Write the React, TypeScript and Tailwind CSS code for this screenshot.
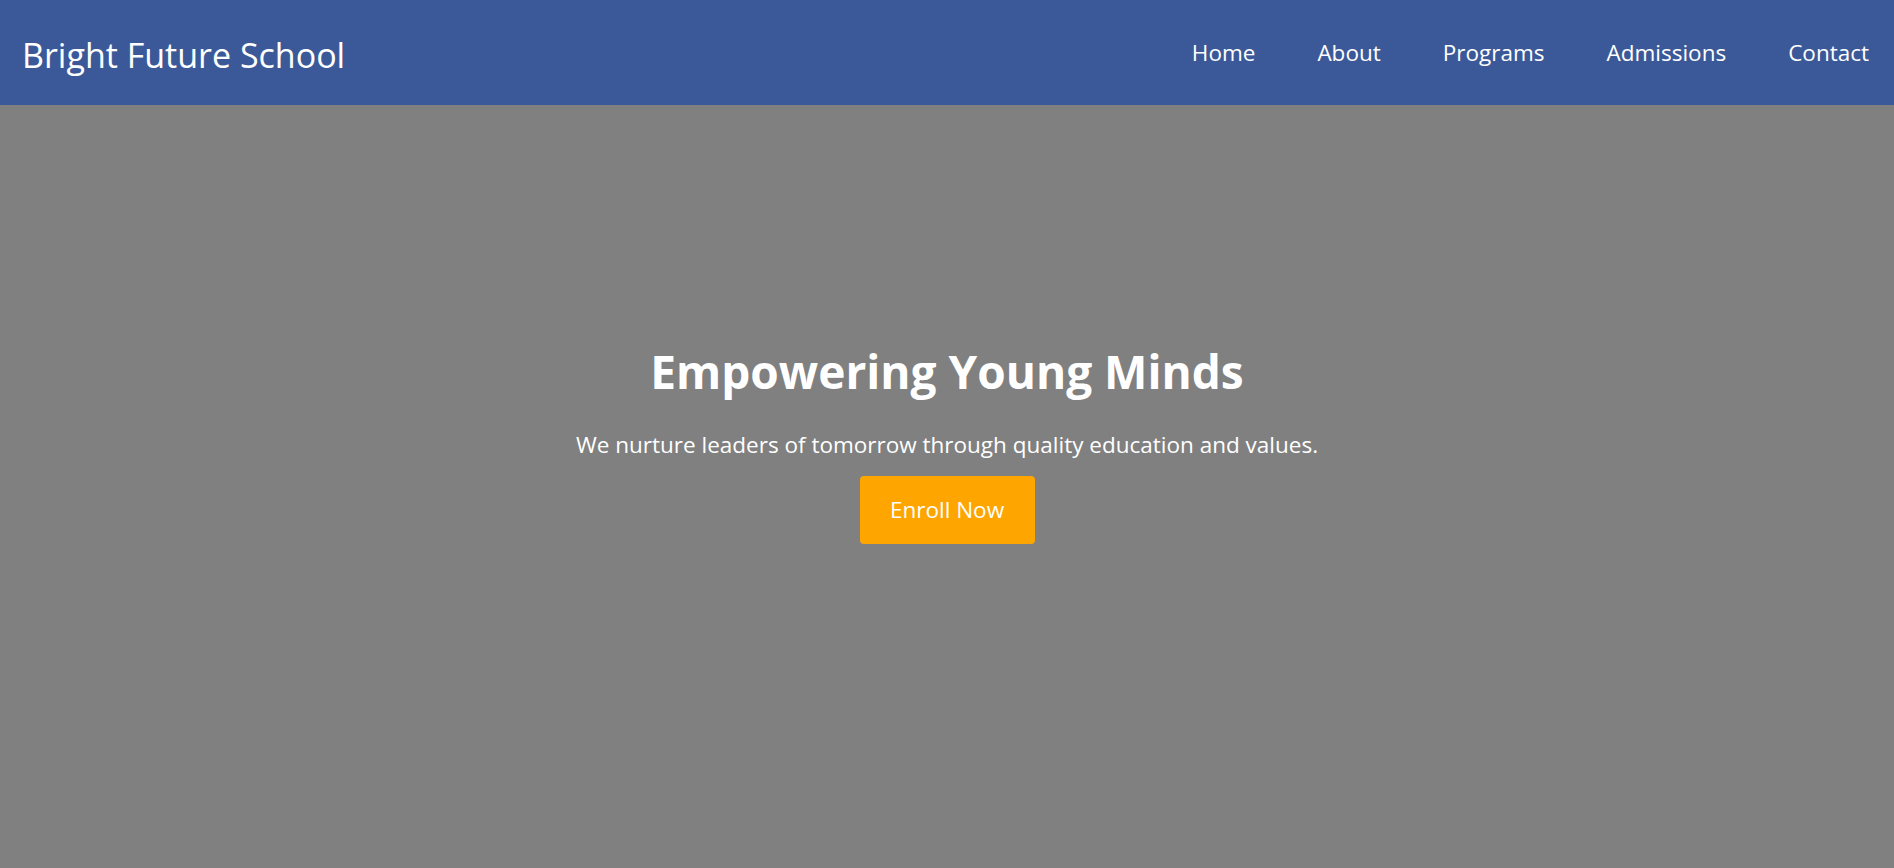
const links = ['Home', 'About', 'Programs', 'Admissions', 'Contact'];

export default function App() {
  return (
    <div className="min-h-screen flex flex-col bg-[#808080] font-['Open_Sans',sans-serif] text-white">
      <header className="h-[105px] shrink-0 bg-[#3b5998] flex items-center justify-between pl-[22px] pr-[25px]">
        <div className="text-[34px] leading-none pt-[4px]">Bright Future School</div>
        <nav className="flex items-center gap-[62px] text-[22.5px] leading-none pt-[2px]">
          {links.map((l) => (
            <a key={l} href="#" className="text-white">
              {l}
            </a>
          ))}
        </nav>
      </header>

      <section className="h-[763px] flex flex-col items-center justify-center pb-[86px] text-center">
        <h1 className="text-[46px] font-bold leading-tight">Empowering Young Minds</h1>
        <p className="mt-[31px] text-[22.5px] leading-tight">
          We nurture leaders of tomorrow through quality education and values.
        </p>
        <button className="mt-[17px] w-[175px] h-[68px] bg-[#ffa500] rounded-[4px] text-white text-[22.5px]">
          Enroll Now
        </button>
      </section>
    </div>
  );
}
